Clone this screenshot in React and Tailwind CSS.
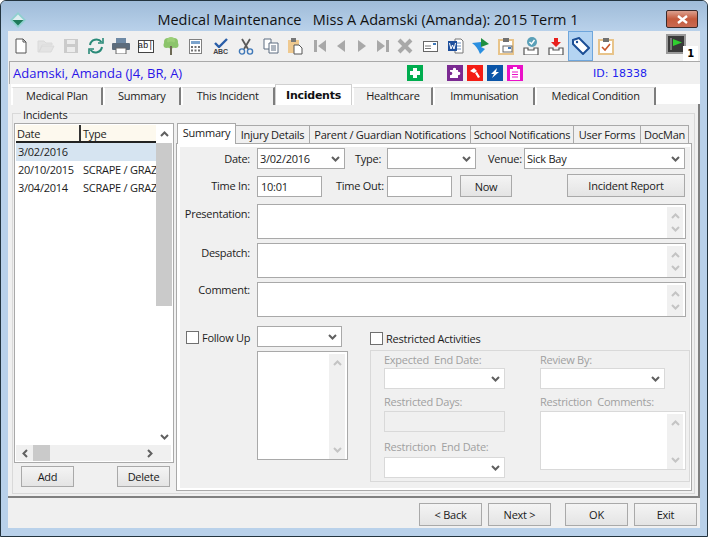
import React from "react";

const Chevron = ({ up, light }) => (
  <svg width="9" height="6" viewBox="0 0 9 6" className="shrink-0">
    <path d={up ? "M1 5L4.5 1.5L8 5" : "M1 1L4.5 4.5L8 1"} fill="none" stroke={light ? "#c4c4c4" : "#606060"} strokeWidth="2" />
  </svg>
);

const Side = ({ left }) => (
  <svg width="6" height="9" viewBox="0 0 6 9" className="shrink-0">
    <path d={left ? "M5 1L1.5 4.5L5 8" : "M1 1L4.5 4.5L1 8"} fill="none" stroke="#606060" strokeWidth="2" />
  </svg>
);

const Combo = ({ className, value, off }) => (
  <div className={`h-[21px] bg-white border flex items-center pl-[2px] pr-[4px] justify-between ${off ? "border-[#d9d9d9]" : "border-[#a9a9a9]"} ${className}`}>
    <span>{value}</span>
    <Chevron />
  </div>
);

const Input = ({ className, value }) => (
  <div className={`h-[21px] bg-white border border-[#a9a9a9] flex items-center pl-[3px] ${className}`}>{value}</div>
);

const Button = ({ className, children }) => (
  <div className={`border border-[#a9a9a9] bg-gradient-to-b from-[#f4f4f4] to-[#e4e4e4] flex items-center justify-center text-[#1a1a1a] ${className}`}>{children}</div>
);

const MemoBox = ({ className, off }) => (
  <div className={`bg-white border flex justify-end p-[1px] ${off ? "border-[#d9d9d9]" : "border-[#a9a9a9]"} ${className}`}>
    <div className="w-[16px] h-full bg-[#f0f0f0] flex flex-col items-center justify-between py-[6px] my-[1px] mr-[1px]">
      <Chevron up light />
      <Chevron light />
    </div>
  </div>
);

const Tab = ({ className, children, active }) => (
  <div className={`flex items-center justify-center ${active ? "bg-white border-t border-x border-[#d0d0d0] font-bold font-['DejaVu_Sans'] text-[11px] text-[#111] h-[21px] pt-[1px]" : "bg-[#f0f0f0] border-t border-[#dcdcdc] border-l-2 border-l-[#fff] border-r-2 border-r-[#7d7d7d] h-[18px] mt-[3px] pb-[2px]"} ${className}`}>{children}</div>
);

const SubTab = ({ className, children, active }) => (
  <div className={`flex items-center justify-center ${active ? "bg-white border-t border-x border-[#a9a9a9] h-[21px] relative z-10 pb-[3px]" : "bg-[#f0f0f0] border-t border-r border-[#a9a9a9] border-t-[#a9a9a9] h-[18px] mt-[2px]"} ${className}`}>{children}</div>
);

const Slot = ({ className = "w-[25px]", children }) => (
  <div className={`h-[24px] flex items-center justify-center shrink-0 ${className}`}>{children}</div>
);

const Badge = ({ className, children }) => (
  <div className={`w-[16px] h-[16px] flex items-center justify-center ${className}`}>{children}</div>
);

const Tri = ({ d }) => (
  <svg width="16" height="16" viewBox="0 0 16 16"><path d={d} fill="#a8a8a8" /></svg>
);

const Clip = ({ color = "#e8c48a" }) => (
  <>
    <rect x="2" y="3" width="14" height="14" fill="#fff" stroke={color} strokeWidth="2" />
    <rect x="6" y="1" width="6" height="4" fill="#707070" />
  </>
);

const Tray = () => (
  <path d="M2 11H6V13H12V11H16V18H2Z" fill="#fff" stroke="#555" strokeWidth="1.2" />
);

export default function App() {
  return (
    <div className="w-[708px] h-[537px] bg-[#b9d1ea] border border-[#23343f] rounded-t-[6px] overflow-hidden flex flex-col font-['Open_Sans',sans-serif] text-[11px] tracking-[-0.25px] leading-none text-[#1c1c1c]">
      <div className="h-[30px] shrink-0 bg-gradient-to-b from-[#9fbcd9] to-[#b9d1ea] flex items-start relative">
        <svg width="16" height="16" viewBox="0 0 16 16" className="ml-[9px] mt-[11px] shrink-0">
          <path d="M8 0L16 8L8 16L0 8Z" fill="#8fd0cf" />
          <path d="M8 2.5L13.5 8H2.5Z" fill="#dfeef0" />
          <path d="M2.5 8H13.5L8 13.5Z" fill="#1f7a5a" />
        </svg>
        <div className="flex-1 text-center text-[14.5px] tracking-normal text-[#111] mt-[12px] pl-[44px] whitespace-pre">Medical Maintenance   Miss A Adamski (Amanda): 2015 Term 1</div>
        <div className="w-[32px] h-[18px] mr-[9px] mt-[9px] shrink-0 rounded-[2px] border border-[#3b2a2a] bg-gradient-to-b from-[#dba08f] via-[#c45a3c] to-[#c96a52] flex items-center justify-center">
          <svg width="13" height="9" viewBox="0 0 13 9"><path d="M2 1L11 8M11 1L2 8" stroke="#fff" strokeWidth="2.4" /></svg>
        </div>
      </div>

      <div className="mx-[7px] h-[497px] shrink-0 bg-[#f0f0f0] flex flex-col">
        <div className="h-[30px] shrink-0 flex items-center relative">
          <Slot>
            <svg width="16" height="16" viewBox="0 0 16 16"><path d="M3 1H10L13 4V15H3Z" fill="#fff" stroke="#555" /><path d="M10 1V4H13" fill="none" stroke="#555" /></svg>
          </Slot>
          <Slot>
            <svg width="18" height="16" viewBox="0 0 18 16"><path d="M1 3H7L9 5H15V7H5L2 14H1ZM5 8H17L14 14H2Z" fill="#e3e3e3" stroke="#dadada" /></svg>
          </Slot>
          <Slot>
            <svg width="16" height="16" viewBox="0 0 16 16"><path d="M1 1H15V15H1Z" fill="#cbcbcb" /><rect x="4" y="2" width="8" height="4" fill="#ececec" /><rect x="4" y="9" width="8" height="5" fill="#ececec" /></svg>
          </Slot>
          <Slot>
            <svg width="18" height="18" viewBox="0 0 18 18" fill="none" stroke="#2a8a78" strokeWidth="2"><path d="M3 8A6.5 6.5 0 0 1 14.5 5" /><path d="M15 10A6.5 6.5 0 0 1 3.5 13" /><path d="M11 6H16V1" strokeWidth="1.6" /><path d="M7 12H2V17" strokeWidth="1.6" /></svg>
          </Slot>
          <Slot>
            <svg width="18" height="16" viewBox="0 0 18 16"><rect x="4" y="0" width="10" height="5" fill="#6f8aa5" /><rect x="0" y="5" width="18" height="7" rx="1" fill="#5c6c7c" /><rect x="4" y="10" width="10" height="6" fill="#fff" stroke="#666" /></svg>
          </Slot>
          <Slot>
            <div className="w-[16px] h-[13px] border border-[#444] bg-white flex items-center justify-center font-['Liberation_Mono'] text-[9px] text-[#222]">ab|</div>
          </Slot>
          <Slot>
            <svg width="16" height="18" viewBox="0 0 16 18"><circle cx="5" cy="5" r="4" fill="#8cc46b" /><circle cx="11" cy="5" r="4" fill="#8cc46b" /><circle cx="8" cy="4" r="4" fill="#9ccf78" /><circle cx="3.5" cy="8" r="3" fill="#8cc46b" /><circle cx="12.5" cy="8" r="3" fill="#8cc46b" /><circle cx="8" cy="8" r="3.5" fill="#8cc46b" /><path d="M7 9H9V18H7Z" fill="#6e6a55" /></svg>
          </Slot>
          <Slot>
            <svg width="13" height="15" viewBox="0 0 13 15"><rect x="0.5" y="0.5" width="12" height="14" fill="#fff" stroke="#808080" /><rect x="2" y="2" width="9" height="3" fill="#7ba3cc" /><path d="M2 7H4V9H2ZM5.5 7H7.5V9H5.5ZM9 7H11V9H9ZM2 10.5H4V12.5H2ZM5.5 10.5H7.5V12.5H5.5ZM9 10.5H11V12.5H9Z" fill="#707070" /></svg>
          </Slot>
          <Slot className="w-[25px] flex-col">
            <svg width="14" height="10" viewBox="0 0 14 10"><path d="M1 5L5 9L13 1" fill="none" stroke="#2a5ea8" strokeWidth="2.4" /></svg>
            <span className="font-['Liberation_Sans'] text-[7px] font-bold text-[#444] leading-[7px]">ABC</span>
          </Slot>
          <Slot>
            <svg width="16" height="17" viewBox="0 0 16 17" fill="none"><path d="M4 1L10 11M12 1L6 11" stroke="#5a5a5a" strokeWidth="1.8" /><circle cx="4" cy="13.5" r="2.6" stroke="#3f78b8" strokeWidth="1.4" /><circle cx="12" cy="13.5" r="2.6" stroke="#3f78b8" strokeWidth="1.4" /></svg>
          </Slot>
          <Slot>
            <svg width="16" height="16" viewBox="0 0 16 16" fill="#fff" stroke="#5c6c80"><path d="M1 1H8V11H1Z" /><path d="M6 5H15V15H6Z" /><path d="M8 8H13M8 10H13M8 12H13" /></svg>
          </Slot>
          <Slot>
            <svg width="15" height="17" viewBox="0 0 15 17"><rect x="0" y="2" width="11" height="13" fill="#efc98f" /><rect x="3" y="0" width="5" height="4" fill="#777" /><path d="M6 7H11L14 10V16H6Z" fill="#fff" stroke="#555" /></svg>
          </Slot>
          <Slot className="w-[24px]"><Tri d="M2 2H5V14H2ZM14 2V14L6 8Z" /></Slot>
          <Slot className="w-[17px]"><Tri d="M12 2V14L4 8Z" /></Slot>
          <Slot className="w-[25px]"><Tri d="M4 2V14L12 8Z" /></Slot>
          <Slot className="w-[17px]"><Tri d="M2 2V14L10 8ZM11 2H14V14H11Z" /></Slot>
          <Slot className="w-[27px]">
            <svg width="16" height="16" viewBox="0 0 16 16"><path d="M2 2L14 14M14 2L2 14" stroke="#a8a8a8" strokeWidth="4" /></svg>
          </Slot>
          <Slot>
            <svg width="15" height="11" viewBox="0 0 15 11"><rect x="0.5" y="0.5" width="14" height="10" fill="#fff" stroke="#666" /><path d="M2 5H8M2 7.5H8" stroke="#777" /><rect x="10" y="2" width="3" height="2" fill="#3f78b8" /></svg>
          </Slot>
          <Slot>
            <svg width="16" height="16" viewBox="0 0 16 16"><path d="M7 1H13L15 3V15H7Z" fill="#fff" stroke="#777" /><path d="M9 5H13M9 8H13M9 11H13" stroke="#6a8fc0" /><rect x="0" y="3" width="9" height="10" fill="#1e4f9c" /><path d="M1.5 5L3 11L4.5 7L6 11L7.5 5" stroke="#fff" fill="none" /></svg>
          </Slot>
          <Slot>
            <svg width="18" height="16" viewBox="0 0 18 16"><path d="M9 0L17 6L9 9Z" fill="#1f8f3f" /><path d="M0 5L9 4V9L13 11L8 16C6 11 4 8 0 5Z" fill="#2b8fe0" /></svg>
          </Slot>
          <Slot>
            <svg width="18" height="18" viewBox="0 0 18 18"><Clip /><rect x="6" y="9" width="9" height="6" fill="#fff" stroke="#666" /><rect x="11" y="10" width="3" height="2" fill="#3f78b8" /></svg>
          </Slot>
          <Slot>
            <svg width="18" height="18" viewBox="0 0 18 18"><circle cx="10" cy="5" r="5" fill="#5aa0b8" /><path d="M7.5 5L9.5 7L12.5 3" stroke="#fff" fill="none" strokeWidth="1.4" /><Tray /></svg>
          </Slot>
          <Slot>
            <svg width="18" height="18" viewBox="0 0 18 18"><path d="M7 1H11V5H14L9 10L4 5H7Z" fill="#e8201c" /><Tray /></svg>
          </Slot>
          <Slot className="w-[25px] h-[30px] bg-[#b4d4f2] border border-[#6ea6dc]">
            <svg width="18" height="18" viewBox="0 0 18 18"><path d="M1 3L7 1L17 11L11 17L1 7Z" fill="#fff" stroke="#1c4f96" strokeWidth="2" /><circle cx="5" cy="5" r="1.2" fill="#1c4f96" /></svg>
          </Slot>
          <Slot>
            <svg width="18" height="18" viewBox="0 0 18 18"><Clip /><path d="M5 10L8 13L13 7" fill="none" stroke="#c8562a" strokeWidth="1.6" /></svg>
          </Slot>
          <div className="ml-[48px] mb-[4px] w-[20px] h-[20px] border-2 border-[#9a9a9a] bg-[#3a3a3a] flex items-center justify-center">
            <svg width="14" height="14" viewBox="0 0 14 14"><path d="M2 1V13" stroke="#bbb" /><path d="M4 2L13 5.5L4 9Z" fill="#2fd02f" /></svg>
          </div>
          <div className="absolute top-[15px] left-[675px] w-[15px] h-[15px] bg-white flex items-center justify-center font-['DejaVu_Sans'] font-bold text-[10px] text-black">1</div>
        </div>

        <div className="h-[23px] shrink-0 border-t border-l border-[#a9a9a9] flex items-center ml-[1px] bg-[#f0f0f0] relative">
          <span className="ml-[3px] w-[394px] text-[13px] tracking-normal text-[#2a14e8] whitespace-nowrap">Adamski, Amanda (J4, BR, A)</span>
          <Badge className="bg-[#00ad4f]">
            <svg width="12" height="12" viewBox="0 0 12 12"><path d="M4 1H8V4H11V8H8V11H4V8H1V4H4Z" fill="#fff" /></svg>
          </Badge>
          <Badge className="bg-[#7b2a92] ml-[24px]">
            <svg width="12" height="12" viewBox="0 0 12 12"><path d="M1 3H4C3 0 8 0 7 3H9V5C12 4 12 9 9 8V11H1V8C4 9 4 4 1 5Z" fill="#fff" /></svg>
          </Badge>
          <Badge className="bg-[#f41c14] ml-[4px]">
            <svg width="12" height="12" viewBox="0 0 12 12"><path d="M1 4L5 1L8 4L5 6ZM6 6L8 5L11 10L9 11Z" fill="#fff" /></svg>
          </Badge>
          <Badge className="bg-[#0b55a8] ml-[4px]">
            <svg width="12" height="12" viewBox="0 0 12 12"><path d="M8 1L2 7H5L3 11L10 5H7Z" fill="#fff" /></svg>
          </Badge>
          <Badge className="bg-[#ea10c8] ml-[4px]">
            <svg width="12" height="13" viewBox="0 0 12 13"><path d="M4 0H8V2H11V13H1V2H4Z" fill="#fff" /><path d="M3 5H9M3 7.5H9M3 10H9" stroke="#ea10c8" /></svg>
          </Badge>
          <span className="ml-[70px] tracking-normal text-[#2222ee] font-['DejaVu_Sans'] text-[11px]">ID: 18338</span>
        </div>

        <div className="h-[20px] shrink-0 flex bg-white pl-[3px] pr-[44px] relative">
          <div className="absolute left-0 top-0 bottom-0 w-[3px] bg-[#f0f0f0]" />
          <Tab className="w-[92px]">Medical Plan</Tab>
          <Tab className="w-[78px]">Summary</Tab>
          <Tab className="w-[94px]">This Incident</Tab>
          <Tab active className="w-[78px]">Incidents</Tab>
          <Tab className="w-[81px]">Healthcare</Tab>
          <Tab className="w-[102px]">Immunisation</Tab>
          <Tab className="w-[121px]">Medical Condition</Tab>
        </div>

        <div className="h-[394px] shrink-0 border-b-2 border-r-2 border-[#808080] pl-[4px] pr-[3px] pt-[9px] pb-[3px]">
          <div className="h-[381px] border border-[#d9d9d9] relative flex pl-[1px] pt-[9px]">
            <span className="absolute -top-[5px] left-[8px] px-[2px] bg-[#f0f0f0]">Incidents</span>
            <div className="w-[160px] shrink-0 flex flex-col">
              <div className="h-[340px] border border-[#a9a9a9] bg-white p-[1px] flex flex-col">
                <div className="flex flex-1 min-h-0">
                  <div className="w-[140px] flex flex-col">
                    <div className="h-[18px] bg-[#fdf9ee] border-b-2 border-[#222] flex items-center shrink-0">
                      <span className="w-[65px] pl-[1px] border-r-2 border-[#333] h-[16px] flex items-center">Date</span>
                      <span className="pl-[2px]">Type</span>
                    </div>
                    <div className="h-[18px] bg-[#d6e4f1] flex items-center pl-[2px] pb-[1px]">3/02/2016</div>
                    <div className="h-[18px] flex items-center pl-[2px] pb-[1px] overflow-hidden whitespace-nowrap">
                      <span className="w-[65px] shrink-0">20/10/2015</span><span>SCRAPE / GRAZE</span>
                    </div>
                    <div className="h-[18px] flex items-center pl-[2px] pb-[1px] overflow-hidden whitespace-nowrap">
                      <span className="w-[65px] shrink-0">3/04/2014</span><span>SCRAPE / GRAZE</span>
                    </div>
                  </div>
                  <div className="w-[16px] flex flex-col items-center">
                    <div className="h-[18px] flex items-center justify-center"><Chevron up /></div>
                    <div className="w-full h-[163px] bg-[#cacaca]" />
                    <div className="flex-1" />
                    <div className="h-[17px] flex items-center justify-center"><Chevron /></div>
                  </div>
                </div>
                <div className="h-[16px] bg-[#f0f0f0] flex items-center shrink-0 mr-[1px]">
                  <div className="w-[16px] flex justify-center ml-[1px]"><Side left /></div>
                  <div className="w-[17px] h-full bg-[#cacaca]" />
                  <div className="w-[97px]" />
                  <Side />
                </div>
              </div>
              <div className="flex justify-between pl-[7px] pr-[4px] mt-[3px]">
                <Button className="w-[53px] h-[21px]">Add</Button>
                <Button className="w-[53px] h-[21px]">Delete</Button>
              </div>
            </div>

            <div className="w-[516px] ml-[2px] shrink-0 flex flex-col">
              <div className="h-[20px] flex pl-[1px] shrink-0">
                <SubTab active className="w-[59px]">Summary</SubTab>
                <SubTab className="w-[74px]">Injury Details</SubTab>
                <SubTab className="w-[161px]">Parent / Guardian Notifications</SubTab>
                <SubTab className="w-[103px]">School Notifications</SubTab>
                <SubTab className="w-[67px]">User Forms</SubTab>
                <SubTab className="w-[48px]">DocMan</SubTab>
              </div>
              <div className="h-[348px] border border-[#a9a9a9] bg-white pt-[3px] pl-[3px] pr-[1px] pb-[2px]">
                <div className="h-full bg-[#f0f0f0] pt-[1px] flex flex-col">
                  <div className="flex items-center">
                    <span className="w-[70px] text-right pb-[1px]">Date:</span>
                    <Combo className="w-[88px] ml-[7px]" value="3/02/2016" />
                    <span className="w-[27px] ml-[10px] pb-[1px]">Type:</span>
                    <Combo className="w-[89px] ml-[5px]" />
                    <span className="w-[33px] ml-[12px] pb-[1px]">Venue:</span>
                    <Combo className="w-[161px] ml-[3px]" value="Sick Bay" />
                  </div>
                  <div className="flex items-end mt-[5px]">
                    <span className="w-[70px] text-right mb-[6px]">Time In:</span>
                    <Input className="w-[65px] ml-[7px]" value="10:01" />
                    <span className="w-[46px] ml-[14px] mb-[6px] whitespace-nowrap">Time Out:</span>
                    <Input className="w-[65px] ml-[5px]" />
                    <Button className="w-[52px] h-[22px] ml-[8px]">Now</Button>
                    <Button className="w-[118px] h-[23px] ml-[55px]">Incident Report</Button>
                  </div>
                  <div className="flex mt-[7px]">
                    <span className="w-[70px] text-right pt-[4px]">Presentation:</span>
                    <MemoBox className="w-[429px] h-[35px] ml-[7px]" />
                  </div>
                  <div className="flex mt-[4px]">
                    <span className="w-[70px] text-right pt-[4px]">Despatch:</span>
                    <MemoBox className="w-[429px] h-[35px] ml-[7px]" />
                  </div>
                  <div className="flex mt-[4px]">
                    <span className="w-[70px] text-right pt-[2px]">Comment:</span>
                    <MemoBox className="w-[429px] h-[35px] ml-[7px]" />
                  </div>
                  <div className="flex mt-[9px]">
                    <div className="w-[190px] shrink-0 flex">
                      <div className="w-[77px] shrink-0 flex items-start pl-[6px] pt-[5px]">
                        <div className="w-[13px] h-[13px] bg-white border border-[#707070] shrink-0" />
                        <span className="ml-[3px] mt-[1px] whitespace-nowrap">Follow Up</span>
                      </div>
                      <div className="flex flex-col">
                        <Combo className="w-[85px]" />
                        <MemoBox className="w-[91px] h-[109px] mt-[4px]" />
                      </div>
                    </div>
                    <div className="w-[320px] shrink-0 flex flex-col pt-[6px]">
                      <div className="flex items-center">
                        <div className="w-[13px] h-[13px] bg-white border border-[#707070]" />
                        <span className="ml-[3px]">Restricted Activities</span>
                      </div>
                      <div className="h-[132px] mt-[5px] border border-[#d9d9d9] flex text-[#a0a0a0] pl-[13px]">
                        <div className="w-[121px] shrink-0 flex flex-col">
                          <span className="h-[14px] mt-[3px] pb-[4px] flex items-center whitespace-pre">Expected  End Date:</span>
                          <Combo className="w-[121px] text-[#1c1c1c]" off />
                          <span className="h-[14px] mt-[7px] pb-[4px] flex items-center">Restricted Days:</span>
                          <div className="h-[21px] mt-[1px] border border-[#d9d9d9] bg-[#f0f0f0]" />
                          <span className="h-[14px] mt-[9px] pb-[4px] flex items-center whitespace-pre">Restriction  End Date:</span>
                          <Combo className="w-[121px] mt-[2px]" off />
                        </div>
                        <div className="w-[146px] ml-[35px] shrink-0 flex flex-col">
                          <span className="h-[14px] mt-[3px] pb-[4px] flex items-center">Review By:</span>
                          <Combo className="w-[125px]" off />
                          <span className="h-[14px] mt-[7px] pb-[4px] flex items-center whitespace-pre">Restriction  Comments:</span>
                          <MemoBox className="w-[146px] h-[59px] mt-[1px]" off />
                        </div>
                      </div>
                    </div>
                  </div>
                </div>
              </div>
            </div>
          </div>
        </div>

        <div className="flex-1 flex items-start pt-[5px] pl-[411px]">
          <Button className="w-[63px] h-[23px]">&lt; Back</Button>
          <Button className="w-[63px] h-[23px] ml-[6px]">Next &gt;</Button>
          <Button className="w-[63px] h-[23px] ml-[14px] border-[#3c8ae0]">OK</Button>
          <Button className="w-[63px] h-[23px] ml-[6px]">Exit</Button>
        </div>
      </div>
    </div>
  );
}
